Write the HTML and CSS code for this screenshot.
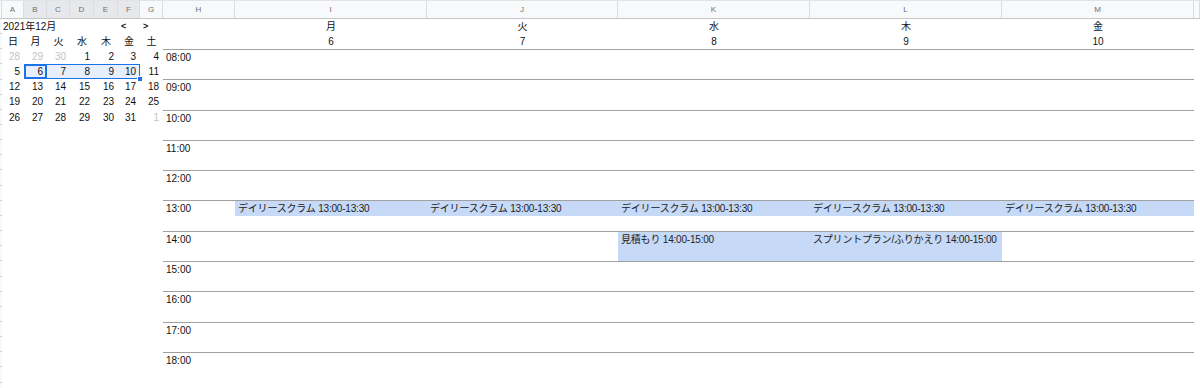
FILE: index.html
```html
<!DOCTYPE html>
<html lang="ja">
<head>
    <meta charset="UTF-8">
    <title>週間カレンダー</title>
    <link rel="stylesheet" href="styles.css">
</head>
<body>
    <div class="col-head">
        <div class="corner"></div>
        <div>A</div>
        <div class="sel">B</div>
        <div class="sel">C</div>
        <div class="sel">D</div>
        <div class="sel">E</div>
        <div class="sel">F</div>
        <div>G</div>
        <div>H</div>
        <div>I</div>
        <div>J</div>
        <div>K</div>
        <div>L</div>
        <div>M</div>
        <div></div>
    </div>

    <div class="sheet">
        <div class="row-head"></div>

        <div class="cal">
            <div class="cal-title">2021年12月</div>
            <div class="cal-nav">&lt;</div>
            <div class="cal-nav">&gt;</div>

            <div class="dow">日</div>
            <div class="dow">月</div>
            <div class="dow">火</div>
            <div class="dow">水</div>
            <div class="dow">木</div>
            <div class="dow">金</div>
            <div class="dow">土</div>

            <div class="num dim">28</div>
            <div class="num dim">29</div>
            <div class="num dim">30</div>
            <div class="num">1</div>
            <div class="num">2</div>
            <div class="num">3</div>
            <div class="num">4</div>

            <div class="num">5</div>
            <div class="num picked first">
                <span class="range"><span class="handle"></span></span>
                <span class="active"></span>
                6
            </div>
            <div class="num picked">7</div>
            <div class="num picked">8</div>
            <div class="num picked">9</div>
            <div class="num picked">10</div>
            <div class="num">11</div>

            <div class="num">12</div>
            <div class="num">13</div>
            <div class="num">14</div>
            <div class="num">15</div>
            <div class="num">16</div>
            <div class="num">17</div>
            <div class="num">18</div>

            <div class="num">19</div>
            <div class="num">20</div>
            <div class="num">21</div>
            <div class="num">22</div>
            <div class="num">23</div>
            <div class="num">24</div>
            <div class="num">25</div>

            <div class="num">26</div>
            <div class="num">27</div>
            <div class="num">28</div>
            <div class="num">29</div>
            <div class="num">30</div>
            <div class="num">31</div>
            <div class="num dim">1</div>
        </div>

        <div class="week">
            <div class="week-head">
                <div></div>
                <div>月</div>
                <div>火</div>
                <div>水</div>
                <div>木</div>
                <div>金</div>
                <div></div>
                <div>6</div>
                <div>7</div>
                <div>8</div>
                <div>9</div>
                <div>10</div>
            </div>

            <div class="hour"><div class="time">08:00</div></div>
            <div class="hour"><div class="time">09:00</div></div>
            <div class="hour"><div class="time">10:00</div></div>
            <div class="hour"><div class="time">11:00</div></div>
            <div class="hour"><div class="time">12:00</div></div>
            <div class="hour">
                <div class="time">13:00</div>
                <div class="ev">デイリースクラム 13:00-13:30</div>
                <div class="ev">デイリースクラム 13:00-13:30</div>
                <div class="ev">デイリースクラム 13:00-13:30</div>
                <div class="ev">デイリースクラム 13:00-13:30</div>
                <div class="ev">デイリースクラム 13:00-13:30</div>
            </div>
            <div class="hour">
                <div class="time">14:00</div>
                <div class="ev ev-long wed">見積もり 14:00-15:00</div>
                <div class="ev ev-long thu">スプリントプラン/ふりかえり 14:00-15:00</div>
            </div>
            <div class="hour"><div class="time">15:00</div></div>
            <div class="hour"><div class="time">16:00</div></div>
            <div class="hour"><div class="time">17:00</div></div>
            <div class="hour"><div class="time">18:00</div></div>
        </div>
    </div>
</body>
</html>
```

FILE: styles.css
```css
* {
    box-sizing: border-box;
}
body {
    margin: 0;
    background-color: #ffffff;
    color: #111111;
    font-family: "Liberation Sans", "Noto Sans CJK JP", sans-serif;
    font-size: 10px;
    overflow: hidden;
}

.col-head {
    display: grid;
    grid-template-columns: 2px 22px 23px 23px 24px 24px 22px 23px 72px 192px 191px 192px 192px 192px 1fr;
    height: 19px;
    background-color: #f8f9fa;
    border-top: 1px solid #e2e3e3;
    border-bottom: 1px solid #c4c7c5;
}
.col-head div {
    border-right: 1px solid #dadce0;
    color: #707070;
    font-size: 8px;
    line-height: 17px;
    text-align: center;
}
.col-head .sel {
    background-color: #e6e8eb;
}

.sheet {
    display: flex;
}
.row-head {
    width: 2px;
    height: 370px;
    background: repeating-linear-gradient(#f8f9fa 0, #f8f9fa 14.15px, #d0d0d0 14.15px, #d0d0d0 15.15px);
}

.cal {
    display: grid;
    grid-template-columns: 22px 23px 23px 24px 24px 22px 23px;
    grid-template-rows: 15px 15px repeat(5, 15.15px);
    align-self: start;
    line-height: 15px;
}
.cal-title {
    grid-column: 1 / 6;
    padding-left: 1px;
    white-space: nowrap;
}
.cal-nav {
    padding-left: 3px;
    font-weight: bold;
    font-size: 9px;
}
.dow {
    text-align: center;
}
.num {
    text-align: right;
    padding-right: 4px;
}
.dim {
    color: #c2c2c2;
}
.picked {
    background-color: #e7effc;
}
.first {
    position: relative;
}
.range {
    position: absolute;
    left: 0;
    top: 0;
    width: 116px;
    height: 100%;
    border: 1px solid #1a73e8;
}
.active {
    position: absolute;
    left: 0;
    top: 0;
    width: 100%;
    height: 100%;
    border: 2px solid #1a73e8;
}
.handle {
    position: absolute;
    right: -4px;
    bottom: -4px;
    width: 6px;
    height: 6px;
    background-color: #1a73e8;
    border: 1px solid #ffffff;
}

.week {
    width: 1031px;
}
.week-head {
    display: grid;
    grid-template-columns: 72px 192px 191px 192px 192px 192px;
    grid-template-rows: 15px 15px;
    line-height: 15px;
    text-align: center;
}
.hour {
    display: grid;
    grid-template-columns: 72px 192px 191px 192px 192px 192px;
    grid-template-rows: 14.15px 15.15px;
    height: 30.3px;
    border-top: 1px solid #a0a0a0;
}
.time {
    padding-left: 3px;
    line-height: 15px;
}
.ev {
    background-color: #c6d9f7;
    padding-left: 3px;
    line-height: 15px;
    height: 15px;
    white-space: nowrap;
    letter-spacing: -0.2px;
    color: #222222;
}
.ev-long {
    grid-row: 1 / 3;
    height: auto;
}
.wed {
    grid-column: 4;
}
.thu {
    grid-column: 5;
}
```
